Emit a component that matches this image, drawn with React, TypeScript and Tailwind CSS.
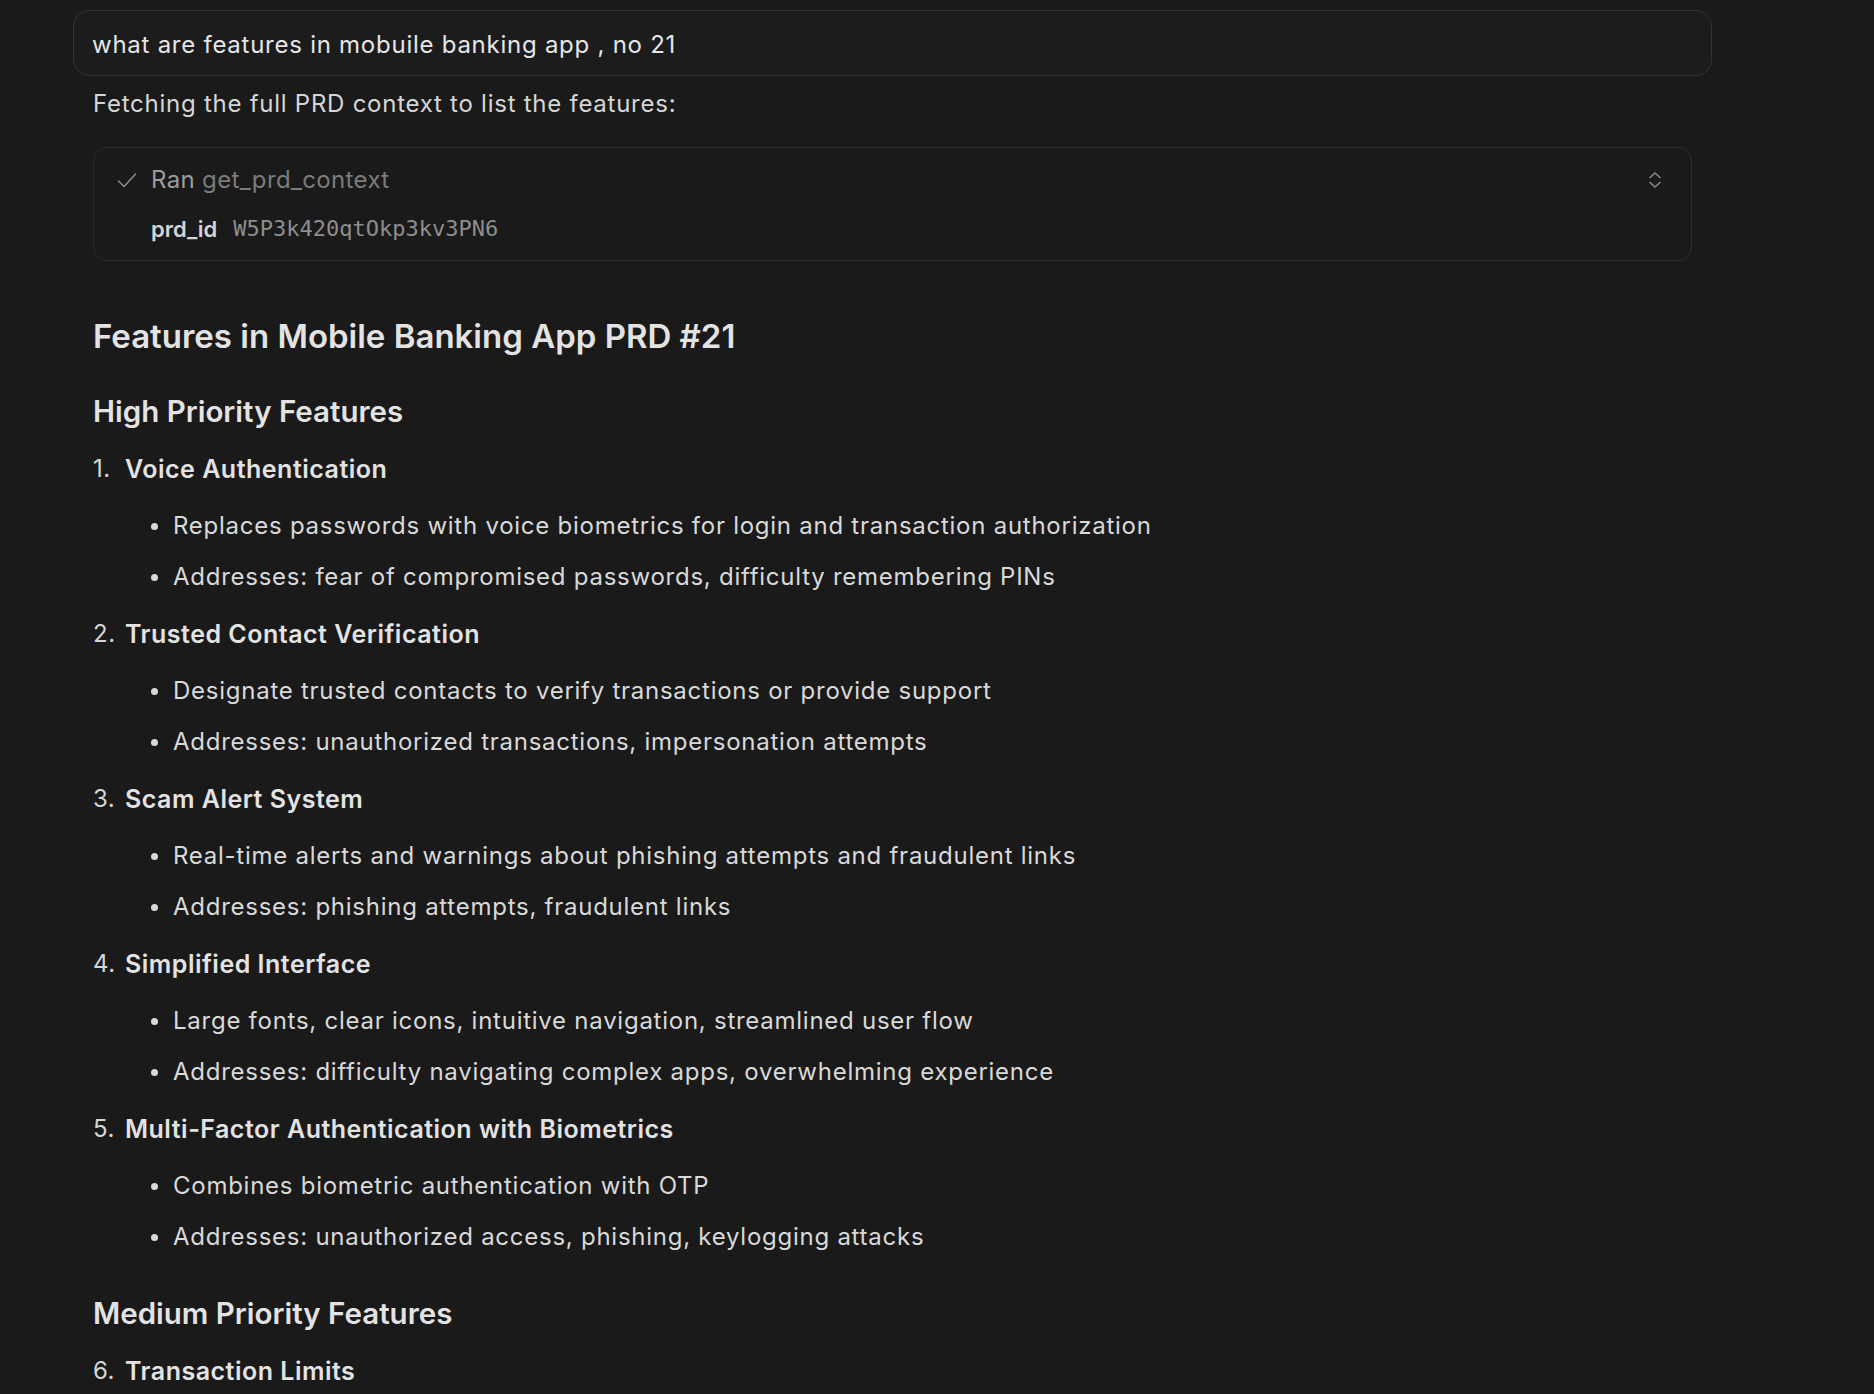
import React from "react";

type Item = { n: number; title: string; bullets: string[] };

const high: Item[] = [
  {
    n: 1,
    title: "Voice Authentication",
    bullets: [
      "Replaces passwords with voice biometrics for login and transaction authorization",
      "Addresses: fear of compromised passwords, difficulty remembering PINs",
    ],
  },
  {
    n: 2,
    title: "Trusted Contact Verification",
    bullets: [
      "Designate trusted contacts to verify transactions or provide support",
      "Addresses: unauthorized transactions, impersonation attempts",
    ],
  },
  {
    n: 3,
    title: "Scam Alert System",
    bullets: [
      "Real-time alerts and warnings about phishing attempts and fraudulent links",
      "Addresses: phishing attempts, fraudulent links",
    ],
  },
  {
    n: 4,
    title: "Simplified Interface",
    bullets: [
      "Large fonts, clear icons, intuitive navigation, streamlined user flow",
      "Addresses: difficulty navigating complex apps, overwhelming experience",
    ],
  },
  {
    n: 5,
    title: "Multi-Factor Authentication with Biometrics",
    bullets: [
      "Combines biometric authentication with OTP",
      "Addresses: unauthorized access, phishing, keylogging attacks",
    ],
  },
];

function ItemHeader({ n, title }: { n: number; title: string }) {
  return (
    <div className="flex items-center h-[34px] leading-[34px] text-[#e3e3e3]">
      <span className="inline-block w-[32px] text-[24px] tracking-[0.02em] font-normal text-[#d6d6d6]">{n}.</span>
      <span className="text-[25px] tracking-[0.02em] font-semibold">{title}</span>
    </div>
  );
}

function FeatureItem({ item }: { item: Item }) {
  return (
    <div className="flex flex-col">
      <ItemHeader n={item.n} title={item.title} />
      <ul className="mt-[23px] flex flex-col gap-[17px]">
        {item.bullets.map((b, i) => (
          <li
            key={i}
            className="flex items-center h-[34px] leading-[34px] text-[24px] tracking-[0.031em] text-[#d9d9d9]"
          >
            <span className="ml-[58px] w-[7px] h-[7px] rounded-full bg-[#d9d9d9] shrink-0" />
            <span className="ml-[15px]">{b}</span>
          </li>
        ))}
      </ul>
    </div>
  );
}

export default function App() {
  return (
    <div
      className="min-h-[1394px] w-full bg-[#1a1a1a] overflow-hidden"
      style={{ fontFamily: "Inter, 'Noto Sans', sans-serif" }}
    >
      <div className="ml-[73px] w-[1639px] pt-[10px]">
        {/* user message */}
        <div className="h-[66px] rounded-[16px] border border-[#333333] bg-[#1c1c1c] flex items-center pl-[18px] pt-[3px]">
          <span className="text-[24px] tracking-[0.031em] text-[#e6e6e6] leading-[34px]">
            what are features in mobuile banking app , no 21
          </span>
        </div>

        <div className="px-[20px]">
          <p className="mt-[11px] h-[34px] leading-[34px] text-[24px] tracking-[0.031em] text-[#d6d6d6]">
            Fetching the full PRD context to list the features:
          </p>

          {/* tool call */}
          <div className="mt-[26px] h-[114px] rounded-[14px] border border-[#2c2c2c] pt-[17px] pl-[23px] pr-[29px]">
            <div className="flex items-center h-[30px]">
              <svg width="20" height="17" viewBox="0 0 20 17" fill="none" className="shrink-0">
                <path
                  d="M1.5 9 L7 14.5 L18.5 2"
                  stroke="#8a8a8a"
                  strokeWidth="1.6"
                  strokeLinecap="round"
                  strokeLinejoin="round"
                />
              </svg>
              <span className="ml-[14px] text-[24px] tracking-[0.015em] leading-[30px] text-[#9d9d9d]">Ran</span>
              <span className="ml-[7px] text-[24px] tracking-[0.015em] leading-[30px] text-[#7c7c7c]">
                get_prd_context
              </span>
              <div className="flex-1" />
              <svg width="14" height="18" viewBox="0 0 14 18" fill="none" className="shrink-0">
                <path d="M2 6.5 L7 2 L12 6.5" stroke="#8a8a8a" strokeWidth="1.6" strokeLinecap="round" strokeLinejoin="round" />
                <path d="M2 11.5 L7 16 L12 11.5" stroke="#8a8a8a" strokeWidth="1.6" strokeLinecap="round" strokeLinejoin="round" />
              </svg>
            </div>
            <div className="mt-[19px] flex items-center h-[30px] pl-[34px]">
              <span className="text-[22px] font-semibold text-[#d4d4d4] leading-[30px]">prd_id</span>
              <span
                className="ml-[16px] text-[22px] text-[#8e8e8e] leading-[30px]"
                style={{ fontFamily: "'DejaVu Sans Mono', 'Liberation Mono', monospace" }}
              >
                W5P3k420qtOkp3kv3PN6
              </span>
            </div>
          </div>

          <h1 className="mt-[53px] h-[44px] leading-[44px] text-[33px] font-semibold text-[#e3e3e3]">
            Features in Mobile Banking App PRD #21
          </h1>

          <h2 className="mt-[34px] h-[38px] leading-[38px] text-[29.5px] font-semibold text-[#e3e3e3]">
            High Priority Features
          </h2>

          <div className="mt-[22px] flex flex-col gap-[23px]">
            {high.map((it) => (
              <FeatureItem key={it.n} item={it} />
            ))}
          </div>

          <h2 className="mt-[40px] h-[38px] leading-[38px] text-[29.5px] font-semibold text-[#e3e3e3]">
            Medium Priority Features
          </h2>

          <div className="mt-[22px]">
            <ItemHeader n={6} title="Transaction Limits" />
          </div>
        </div>
      </div>
    </div>
  );
}
